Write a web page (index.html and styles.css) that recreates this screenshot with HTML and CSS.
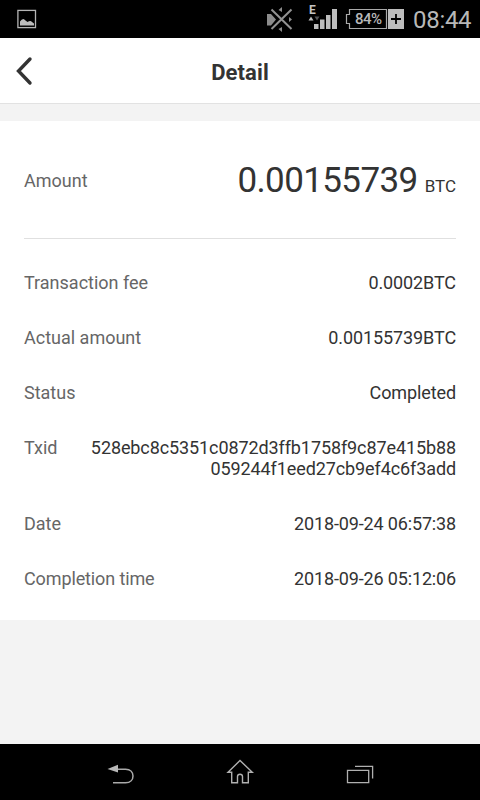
FILE: index.html
```html
<!DOCTYPE html>
<html lang="en">
<head>
<meta charset="utf-8">
<title>Detail</title>
<link rel="stylesheet" href="styles.css">
</head>
<body>
<div class="status-bar">
  <svg class="status-icons" width="410" height="38" viewBox="0 0 410 38">
    <rect x="17.9" y="10.4" width="17.6" height="17.2" fill="none" stroke="#b5b5b5" stroke-width="1.3"/>
    <path d="M20 25.500V21.500q3-4.500 5.500-1l2 1.500q3-2 4.500 0l2 1.500v2z" fill="#bdbdbd"/>
    <path d="M267 14h4l5 5.500-5 6h-4zM278.500 10l3.500-3v5zM278.500 29l3.500 3v-5zM289 17l3 2.500-3 2.500z" fill="#8c8c8c"/>
    <path d="M271.500 9.500l20 19.500M291.500 9.500l-20 19.500" stroke="#000" stroke-width="4" fill="none"/>
    <path d="M271.500 9.500l20 19.500M291.500 9.500l-20 19.500" stroke="#929292" stroke-width="2" fill="none"/>
    <text class="network" x="309" y="14">E</text>
    <path d="M308.500 20.500l2.500-4 2.500 4z" fill="#bdbdbd"/>
    <path d="M314.500 16.500h5l-2.500 4z" fill="#555"/>
    <path d="M314 24h4.500v5H314zM320 19.500h4.500V29H320zM326 15h4.500v14H326zM332 9h5v20h-5z" fill="#bdbdbd"/>
    <path d="M386.500 9.500h-37v5h-3v9h3v5h37z" fill="none" stroke="#aaa" stroke-width="1.200"/>
    <path d="M388 9h16v20h-16z" fill="#bdbdbd"/>
    <path d="M391 19h10M396 14v10" stroke="#000" stroke-width="1.800"/>
  </svg>
  <span class="battery-level">84%</span>
  <span class="clock">08:44</span>
</div>
<header class="header">
  <svg class="back" width="24" height="32" viewBox="0 0 24 32"><path d="M15 4L3.500 16 15 28" fill="none" stroke="#333" stroke-width="3.400" stroke-linecap="round"/></svg>
  <h1 class="title">Detail</h1>
</header>
<main class="card">
  <div class="amount">
    <span class="label">Amount</span>
    <span class="total"><span class="number">0.00155739</span><span class="unit">BTC</span></span>
  </div>
  <dl class="details">
    <div class="row"><dt class="label">Transaction fee</dt><dd>0.0002BTC</dd></div>
    <div class="row"><dt class="label">Actual amount</dt><dd>0.00155739BTC</dd></div>
    <div class="row"><dt class="label">Status</dt><dd>Completed</dd></div>
    <div class="row"><dt class="label">Txid</dt><dd>528ebc8c5351c0872d3ffb1758f9c87e415b88<br>059244f1eed27cb9ef4c6f3add</dd></div>
    <div class="row"><dt class="label">Date</dt><dd class="time">2018-09-24 06:57:38</dd></div>
    <div class="row"><dt class="label long">Completion time</dt><dd class="time">2018-09-26 05:12:06</dd></div>
  </dl>
</main>
<nav class="nav-bar">
  <svg width="120" height="56" viewBox="60 744 120 56"><path d="M117 769.200h8.500c5 0 7.500 3 7.500 6.800s-2.500 6.800-7.500 6.800H113" fill="none" stroke="#aaa" stroke-width="1.500"/><path d="M107.500 769l10.500-4.200v7.800z" fill="#b8b8b8"/></svg>
  <svg width="120" height="56" viewBox="180 744 120 56"><path d="M240 760.500L228 772.300h3.700v10.400h5.800v-6.200q0-2.300 2.500-2.300t2.500 2.300v6.200h5.800v-10.400h4z" fill="none" stroke="#b0b0b0" stroke-width="1.400"/></svg>
  <svg width="120" height="56" viewBox="300 744 120 56"><path d="M347.500 770.300h21.200v12.400h-21.200zM355 766.400h17.600v12" fill="none" stroke="#b0b0b0" stroke-width="1.300"/></svg>
</nav>
</body>
</html>
```
FILE: styles.css
```css
* {
  box-sizing: border-box;
}

body {
  margin: 0;
  width: 480px;
  height: 800px;
  display: flex;
  flex-direction: column;
  overflow: hidden;
  background: #f3f3f3;
  color: #333;
  font-family: Roboto, "Liberation Sans", sans-serif;
  font-size: 18px;
  line-height: 21px;
}

.status-bar {
  position: relative;
  display: flex;
  height: 38px;
  background: #000;
  color: #b8b8b8;
}

.status-icons {
  display: block;
}

.network {
  fill: #c4c4c4;
  font-size: 12px;
  font-weight: 700;
}

.battery-level {
  position: absolute;
  left: 355px;
  top: 9px;
  font-size: 15px;
  font-weight: 500;
  letter-spacing: -0.5px;
}

.clock {
  margin-left: 3px;
  font-size: 24px;
  line-height: 40px;
  letter-spacing: -0.3px;
}

.header {
  display: grid;
  grid-template-columns: 48px 1fr 48px;
  align-items: center;
  height: 66px;
  padding-top: 1px;
  background: #fff;
  border-bottom: 1px solid #e2e2e2;
}

.back {
  margin-left: 15px;
}

.title {
  margin: 4px 0 0;
  text-align: center;
  font-size: 22px;
  font-weight: 700;
  line-height: 26px;
  letter-spacing: 0.1px;
}

.card {
  height: 499px;
  margin-top: 17px;
  padding: 0 24px;
  background: #fff;
}

.label {
  color: #666;
}

.label.long {
  letter-spacing: -0.12px;
}

.amount {
  display: flex;
  align-items: center;
  justify-content: space-between;
  height: 118px;
  padding-top: 2px;
  border-bottom: 1px solid #e0e0e0;
}

.number {
  font-size: 35px;
  line-height: 42px;
  letter-spacing: -0.6px;
}

.unit {
  margin-left: 7px;
  font-size: 17px;
}

.details {
  display: flex;
  flex-direction: column;
  gap: 34px;
  margin: 0;
  padding-top: 33px;
}

.row {
  display: flex;
  justify-content: space-between;
}

.row dd {
  margin: 0;
  text-align: right;
  letter-spacing: -0.1px;
}

.row .time {
  letter-spacing: -0.15px;
}

.nav-bar {
  display: flex;
  justify-content: center;
  height: 56px;
  margin-top: auto;
  background: #000;
}
```
